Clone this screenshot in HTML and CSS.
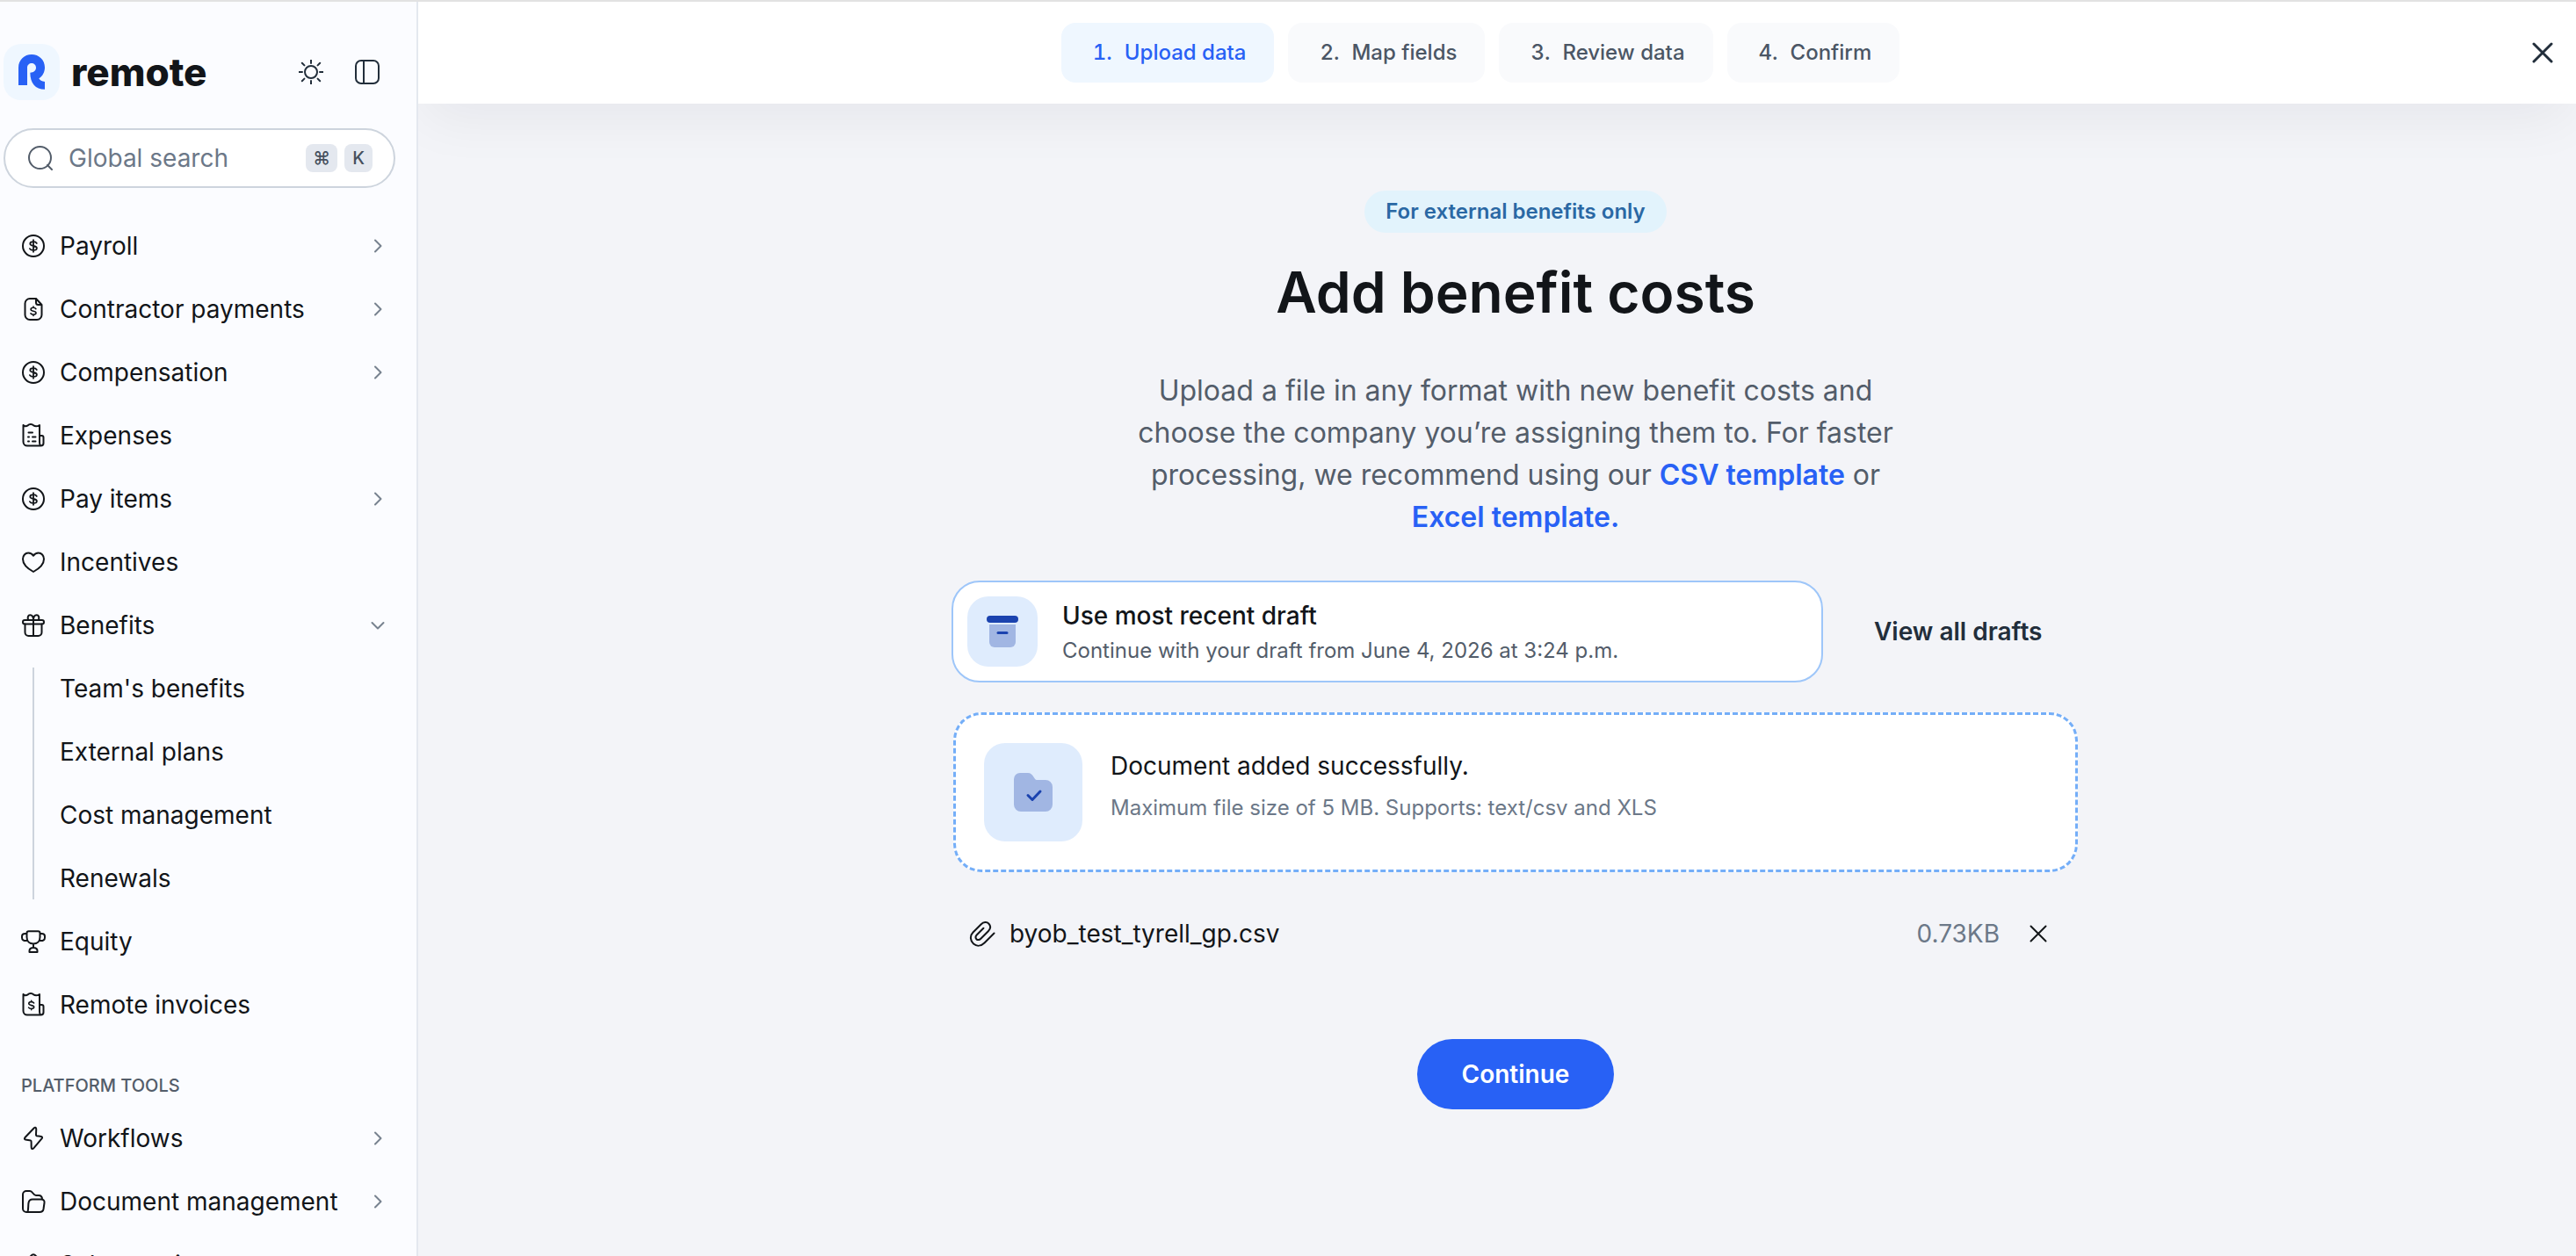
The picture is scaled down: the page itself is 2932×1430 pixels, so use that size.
FILE: index.html
```html
<!DOCTYPE html>
<html lang="en">
<head>
<meta charset="utf-8">
<meta name="viewport" content="width=device-width, initial-scale=1">
<title>Add benefit costs</title>
<link rel="stylesheet" href="styles.css">
</head>
<body>
<svg class="sprite" aria-hidden="true">
  <symbol id="i-coin" viewBox="0 0 28 28"><circle cx="14" cy="14" r="12"/><path stroke-width="1.800" d="M14 7.200v13.600M17.800 11c-.7-1.200-2-1.800-3.800-1.800-2.200 0-3.700.9-3.700 2.400 0 1.400 1.300 2 3.700 2.400s3.900 1 3.900 2.500-1.700 2.400-3.900 2.400-3.400-.6-4.100-1.800"/></symbol>
  <symbol id="i-file" viewBox="0 0 28 28"><path d="M17 2h-7a5.500 5.500 0 0 0-5.500 5.500v13A5.500 5.500 0 0 0 10 26h8a5.500 5.500 0 0 0 5.500-5.500V9L17 2v4.500A2.500 2.500 0 0 0 19.500 9h4"/><path stroke-width="1.600" d="M14 11v1.300M14 20v1.500M16.900 13.700c-.6-.9-1.500-1.400-2.900-1.400-1.700 0-2.900.8-2.900 2s1.100 1.600 2.900 2 3 .8 3 2-1.200 1.900-3 1.900c-1.500 0-2.500-.5-3.100-1.400"/></symbol>
  <symbol id="i-receipt" viewBox="0 0 28 28"><path d="M2.500 2v19A4.500 4.500 0 0 0 7 25.500h15.500a3 3 0 0 0 3-3V16a2 2 0 0 0-2-2H21M2.500 2c1.500 1.600 3.500 1.600 5.200.4 1.500-1.800 5-1.800 6.500 0 1.700 1.200 4.300 1.200 6.800-.4v19c0 3 .6 4.500 2 4.500M8.500 10.500h4.500M8 15.500h1M13 15.500h3.500M8 20.500h1M13 20.500h3.500"/></symbol>
  <symbol id="i-heart" viewBox="0 0 28 28"><path d="M14 25C9.500 22.500 2 17.500 2 10.500 2 6.500 4.800 3.500 8.200 3.500c2.600 0 4.600 1.300 5.800 3.200 1.200-1.900 3.200-3.200 5.800-3.200 3.400 0 6.200 3 6.200 7C26 17.500 18.500 22.500 14 25z"/></symbol>
  <symbol id="i-gift" viewBox="0 0 28 28"><rect x="2" y="8" width="24" height="4.500" rx="2.200"/><path d="M4.500 12.500V22a4 4 0 0 0 4 4h11a4 4 0 0 0 4-4v-9.500M14 8v18M14 8c0-3.500-1.300-5.800-3.700-5.800S7 4.800 8.200 8M14 8c0-3.500 1.300-5.800 3.700-5.800S21 4.800 19.800 8"/></symbol>
  <symbol id="i-trophy" viewBox="0 0 28 28"><path d="M6.500 4.500c0-1.200 1-2.200 2.200-2.200h10.600c1.200 0 2.200 1 2.200 2.200V9c0 4.500-3 7.500-7.500 7.500S6.500 13.500 6.500 9zM6.300 5H4.500C2.500 5 1 6 1 8v1.500C1 12 2.700 13.500 6.800 13M21.700 5h1.800c2 0 3.500 1 3.500 3v1.500c0 2.500-1.700 4-5.800 3.500M14 16.500v4M9.500 26v-1.500c0-2.200 1.400-3.500 4.500-3.500s4.500 1.300 4.500 3.500V26z"/></symbol>
  <symbol id="i-invoice" viewBox="0 0 28 28"><path d="M2.500 2v19A4.500 4.500 0 0 0 7 25.500h15.500a3 3 0 0 0 3-3V16a2 2 0 0 0-2-2H21M2.500 2c1.500 1.600 3.500 1.600 5.200.4 1.500-1.800 5-1.800 6.500 0 1.700 1.200 4.300 1.200 6.800-.4v19c0 3 .6 4.500 2 4.500"/><path stroke-width="1.600" d="M11.700 9.200v1.400M11.700 18.300v1.500M14.600 12c-.6-.9-1.500-1.400-2.900-1.400-1.700 0-2.900.8-2.900 2s1.100 1.600 2.900 2 3 .8 3 2-1.200 1.900-3 1.900c-1.500 0-2.500-.5-3.100-1.400"/></symbol>
  <symbol id="i-bolt" viewBox="0 0 28 28"><path d="M14.800 2.200 4.300 13.300c-.8.9-.4 2 .8 2.300 3 .5 6 .4 6.300 1.200.6 1.500-.1 5.500.4 8.200.2 1.200 1.400 1.400 2.200.6l9.700-11.500c.7-.9.4-1.900-.8-2.200-2.800-.5-5.300-.2-5.700-1.100-.6-1.500.3-5.500 0-7.700-.2-1.400-1.500-1.900-2.400-.9z"/></symbol>
  <symbol id="i-folder" viewBox="0 0 28 28"><path d="M8 26H6a4 4 0 0 1-4-4V6a4 4 0 0 1 4-4h4c3.500 0 3.500 5 7 5h3c2.500 0 4 1.500 4 4.500M7.500 26c1-4 .5-7.500 1-10.500.4-2.500 2-4 4.500-4h10c2.500 0 4 1.500 3.500 4l-1 7c-.4 2.300-2 3.500-4.500 3.500z"/></symbol>
  <symbol id="i-calc" viewBox="0 0 28 28"><path d="M14 2.200c1 0 1.800.5 2.600 1.400l8 8.400c1.200 1.200 1.200 2.800 0 4l-8 8.400c-1.600 1.800-3.600 1.800-5.200 0L3.400 16c-1.200-1.200-1.200-2.800 0-4l8-8.400c.8-.9 1.600-1.400 2.600-1.400z"/></symbol>
  <symbol id="i-right" viewBox="0 0 16 16"><path d="m5 1.500 6.500 6.500L5 14.500"/></symbol>
  <symbol id="i-down" viewBox="0 0 16 16"><path d="M1.500 5 8 11.500 14.500 5"/></symbol>
</svg>

<div class="app">
  <aside class="sidebar">
    <div class="brand">
      <a class="logo" href="#" aria-label="Home">
        <span class="logo-tile"><svg viewBox="0 0 90 120"><path d="M0 105V45C0 19 20 0 45 0S90 19 90 44C90 60 82 74 70 82C72 88 80 92 90 93V119C58 119 40 98 40 62C52 62 60 55 60 45C60 36 53 30 45 30S30 36 30 45V105Z"/></svg></span>
        <span class="logo-word">remote</span>
      </a>
      <button class="icon-btn" type="button" aria-label="Toggle theme"><svg viewBox="0 0 28 28"><circle cx="14" cy="14" r="7"/><path d="M14 0v4M14 24v4M0 14h4M24 14h4M3.800 3.800l2.600 2.600M21.600 21.600l2.600 2.600M3.800 24.200l2.600-2.600M21.600 6.400l2.600-2.600"/></svg></button>
      <button class="icon-btn" type="button" aria-label="Collapse sidebar"><svg viewBox="0 0 28 28"><rect x="1" y="1" width="26" height="26" rx="6"/><path d="M10 1v26"/></svg></button>
    </div>

    <label class="search">
      <svg viewBox="0 0 28 28"><circle cx="13.500" cy="13.500" r="12.500"/><path d="m22 22 5 5"/></svg>
      <input type="search" placeholder="Global search" aria-label="Global search">
      <kbd>⌘</kbd><kbd>K</kbd>
    </label>

    <nav class="nav">
      <a href="#"><svg><use href="#i-coin"/></svg><span>Payroll</span><svg class="chev"><use href="#i-right"/></svg></a>
      <a href="#"><svg><use href="#i-file"/></svg><span>Contractor payments</span><svg class="chev"><use href="#i-right"/></svg></a>
      <a href="#"><svg><use href="#i-coin"/></svg><span>Compensation</span><svg class="chev"><use href="#i-right"/></svg></a>
      <a href="#"><svg><use href="#i-receipt"/></svg><span>Expenses</span></a>
      <a href="#"><svg><use href="#i-coin"/></svg><span>Pay items</span><svg class="chev"><use href="#i-right"/></svg></a>
      <a href="#"><svg><use href="#i-heart"/></svg><span>Incentives</span></a>
      <a href="#"><svg><use href="#i-gift"/></svg><span>Benefits</span><svg class="chev"><use href="#i-down"/></svg></a>
      <div class="subnav">
        <a href="#">Team's benefits</a>
        <a href="#">External plans</a>
        <a href="#">Cost management</a>
        <a href="#">Renewals</a>
      </div>
      <a href="#"><svg><use href="#i-trophy"/></svg><span>Equity</span></a>
      <a href="#"><svg><use href="#i-invoice"/></svg><span>Remote invoices</span></a>
      <h2>PLATFORM TOOLS</h2>
      <a href="#"><svg><use href="#i-bolt"/></svg><span>Workflows</span><svg class="chev"><use href="#i-right"/></svg></a>
      <a href="#"><svg><use href="#i-folder"/></svg><span>Document management</span><svg class="chev"><use href="#i-right"/></svg></a>
      <a href="#"><svg><use href="#i-calc"/></svg><span>Salary estimator</span></a>
    </nav>
  </aside>

  <div class="page">
    <header class="topbar">
      <ol class="steps">
        <li class="current" aria-current="step"><span>1.</span><span>Upload data</span></li>
        <li><span>2.</span><span>Map fields</span></li>
        <li><span>3.</span><span>Review data</span></li>
        <li><span>4.</span><span>Confirm</span></li>
      </ol>
      <button class="close" type="button" aria-label="Close"><svg viewBox="0 0 24 24"><path d="M2 2l20 20M22 2 2 22"/></svg></button>
    </header>

    <main class="content">
      <span class="pill">For external benefits only</span>
      <h1>Add benefit costs</h1>
      <p class="intro">Upload a file in any format with new benefit costs and choose the company you’re assigning them to. For faster processing, we recommend using our <a href="#">CSV template</a> or <a href="#">Excel template.</a></p>

      <div class="panel">
        <div class="drafts">
          <button class="draft" type="button">
            <span class="tile"><svg viewBox="0 0 40 40"><path class="soft" d="M5 12h30v20a6 6 0 0 1-6 6H11a6 6 0 0 1-6-6z"/><rect class="solid" x="2" y="2" width="36" height="8" rx="4"/><path class="line" d="M15 21.500h10"/></svg></span>
            <span class="draft-text"><strong>Use most recent draft</strong><span>Continue with your draft from June 4, 2026 at 3:24 p.m.</span></span>
          </button>
          <a class="all-drafts" href="#">View all drafts</a>
        </div>

        <section class="dropzone">
          <span class="tile large"><svg viewBox="0 0 48 48"><path class="soft" d="M2 9a7 7 0 0 1 7-7h9c6 0 7 8 10 8h10a8 8 0 0 1 8 8v20a8 8 0 0 1-8 8H10a8 8 0 0 1-8-8z"/><path class="line" d="m18 27.500 5 5 9-9.500"/></svg></span>
          <div class="drop-text"><p>Document added successfully.</p><small>Maximum file size of 5 MB. Supports: text/csv and XLS</small></div>
        </section>

        <div class="file">
          <svg viewBox="0 0 30 30"><path d="M28.500 14.500 17.500 25.500c-4 4-9 4-12.500 1s-4.500-9-.5-13L13.500 4.500c3-3 6.800-3.200 9-.8s2.200 5.500-.7 8.500l-8.500 8.500c-1.700 1.700-3.800 1.700-4.900.5s-1.200-3.200.5-4.900l7.500-7.500"/></svg>
          <span class="file-name">byob_test_tyrell_gp.csv</span>
          <span class="file-size">0.73KB</span>
          <button class="remove" type="button" aria-label="Remove file"><svg viewBox="0 0 20 20"><path d="M1.500 1.500l17 17M18.500 1.500l-17 17"/></svg></button>
        </div>
      </div>

      <button class="continue" type="button">Continue</button>
    </main>
  </div>
</div>
</body>
</html>
```
FILE: styles.css
```css
* { box-sizing: border-box; }

:root {
  --ink: #121519;
  --slate: #535d6a;
  --muted: #6c7888;
  --blue: #2861f5;
}

body {
  margin: 0;
  font-family: Inter, "Liberation Sans", sans-serif;
  font-size: 28px;
  line-height: 40px;
  color: var(--ink);
  background: #f3f4f8;
}

button, input { font: inherit; color: inherit; }
button { padding: 0; border: 0; background: none; }
a { color: inherit; text-decoration: none; }
h1, h2, p, ol { margin: 0; padding: 0; }
svg { flex: none; fill: none; stroke: currentColor; stroke-width: 2; stroke-linecap: round; stroke-linejoin: round; }
.sprite { display: none; }

.app {
  display: flex;
  height: 100vh;
  overflow: hidden;
  border-top: 2px solid #e2e2e2;
}

/* Sidebar */
.sidebar {
  position: relative;
  z-index: 1;
  flex: none;
  width: 476px;
  overflow: hidden;
  padding: 48px 24px 0 4px;
  background: #fbfcff;
  border-right: 2px solid #e4e8ef;
}

.brand { display: flex; align-items: center; gap: 16px; padding-right: 8px; }
.logo { display: flex; align-items: center; gap: 13px; margin-right: auto; }
.logo-tile { display: grid; place-items: center; width: 64px; height: 64px; border-radius: 20px; background: #eff7ff; }
.logo-tile svg { width: 30px; height: 40px; fill: var(--blue); stroke: none; }
.logo-word { font-size: 44px; font-weight: 800; }
.icon-btn { display: grid; place-items: center; width: 48px; height: 48px; color: #222e3b; }
.icon-btn svg { width: 28px; height: 28px; }

.search {
  display: flex;
  align-items: center;
  gap: 8px;
  height: 68px;
  margin-top: 32px;
  padding: 0 24px 0 26px;
  border: 2px solid #cdd4dd;
  border-radius: 34px;
  background: #fff;
}
.search svg { width: 28px; height: 28px; color: var(--slate); }
.search input { flex: 1; min-width: 0; margin-left: 10px; padding: 0; border: 0; outline: 0; background: none; }
.search input::placeholder { color: var(--muted); opacity: 1; }
kbd { min-width: 32px; padding: 0 8px; border-radius: 8px; background: #e4e8ef; color: #46505d; font: 500 20px/32px Inter, "DejaVu Sans", sans-serif; text-align: center; }

.nav { margin-top: 30px; padding-left: 20px; }
.nav a { display: flex; align-items: center; gap: 16px; height: 72px; white-space: nowrap; }
.nav svg { width: 28px; height: 28px; }
.nav svg.chev { width: 16px; height: 16px; margin-left: auto; margin-right: 12px; color: #77828f; }
.subnav { margin: 12px 0 12px 13px; border-left: 2px solid #cdd4dd; height: 264px; padding-left: 29px; display: flex; flex-direction: column; justify-content: center; }
.subnav a { flex: none; }
.nav h2 { padding: 36px 0 4px; font-size: 20px; line-height: 40px; font-weight: 500; color: var(--slate); }

/* Top bar */
.page { flex: 1; min-width: 0; display: flex; flex-direction: column; }
.topbar {
  display: flex;
  align-items: center;
  height: 116px;
  padding: 0 14px 0 24px;
  background: #fff;
  box-shadow: 0 24px 64px -8px rgba(20, 25, 40, 0.06);
}
.steps { flex: 1; display: flex; justify-content: center; gap: 16px; list-style: none; }
.steps li { display: flex; gap: 14px; padding: 14px 32px 14px 36px; border-radius: 16px; background: #f9fafc; color: #4b5665; font-size: 24px; font-weight: 500; font-variant-numeric: tabular-nums; }
.steps .current { background: #eff7ff; color: var(--blue); }
.close { display: grid; place-items: center; width: 48px; height: 48px; color: #222e3b; }
.close svg { width: 24px; height: 24px; stroke-width: 3; }

/* Content */
.content { display: flex; flex-direction: column; align-items: center; padding: 99px 40px 64px 82px; }
.pill { padding: 4px 24px; border-radius: 24px; background: #e2f3fc; color: #2a68a4; font-size: 24px; font-weight: 600; }
h1 { margin-top: 28px; font-size: 64px; line-height: 80px; font-weight: 600; }
.intro { max-width: 880px; margin-top: 48px; font-size: 32px; line-height: 48px; text-align: center; color: var(--slate); }
.intro a { color: var(--blue); font-weight: 600; }

.panel { width: 100%; max-width: 1284px; margin-top: 48px; }
.drafts { display: flex; align-items: center; gap: 58px; }
.draft { flex: 1; max-width: 992px; display: flex; align-items: center; gap: 28px; padding: 16px; border: 2px solid #9ec6f9; border-radius: 32px; background: #fff; text-align: left; }
.tile { flex: none; display: grid; place-items: center; width: 80px; height: 80px; border-radius: 24px; background: #dfecfd; }
.tile svg { width: 40px; height: 40px; }
.tile.large { width: 112px; height: 112px; }
.tile.large svg { width: 48px; height: 48px; }
.soft { fill: #a1b6e3; stroke: none; }
.solid { fill: #1b43af; stroke: none; }
.line { stroke: #1b43af; stroke-width: 3; }
.draft-text { display: flex; flex-direction: column; }
.draft-text strong { font-weight: 500; line-height: 44px; }
.draft-text span { font-size: 24px; line-height: 36px; color: var(--slate); }
.all-drafts { font-weight: 600; color: #222e3b; }

.dropzone { display: flex; gap: 32px; margin: 34px 2px 0; padding: 32px; border: 3px dashed #74aef8; border-radius: 32px; background: #fff; }
.drop-text { padding-top: 6px; }
.drop-text small { display: block; margin-top: 8px; font-size: 24px; color: var(--muted); }

.file { display: flex; align-items: center; margin-top: 50px; padding: 0 27px 0 20px; }
.file svg { width: 30px; height: 30px; }
.file-name { margin: 0 auto 0 16px; }
.file-size { margin-right: 24px; color: var(--muted); }
.remove { display: grid; place-items: center; width: 40px; height: 40px; }
.remove svg { width: 20px; height: 20px; }

.continue { min-width: 224px; height: 80px; margin-top: 100px; border-radius: 40px; background: var(--blue); color: #fff; font-weight: 600; }
```
